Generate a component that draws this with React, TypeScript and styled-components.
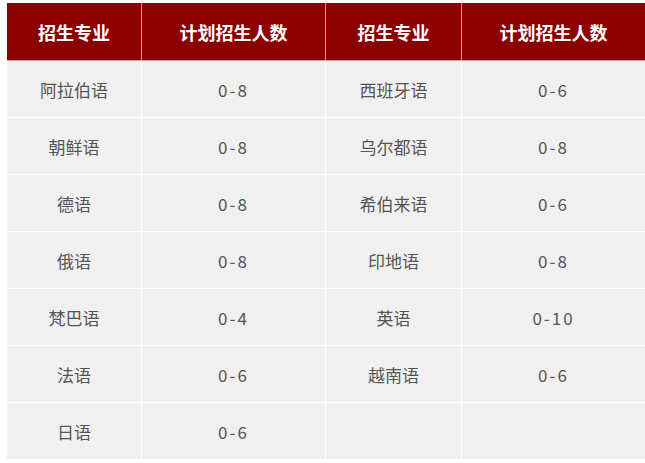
import styled, { createGlobalStyle } from 'styled-components';

const GlobalStyle = createGlobalStyle`
  body {
    margin: 0;
    background: #ffffff;
    font-family: "Noto Sans CJK SC", "Noto Sans", sans-serif;
  }
`;

const Page = styled.div`
  padding: 3px 4px 3px 6px;
`;

const Table = styled.table`
  width: 635px;
  border-collapse: collapse;
  table-layout: fixed;
`;

const HeadCell = styled.th<{ $w: number }>`
  width: ${(p) => p.$w}px;
  height: 57px;
  padding: 0;
  background: #8b0000;
  color: #ffffff;
  font-size: 18px;
  font-weight: 700;
  text-align: center;
  border: 1px solid rgba(255, 255, 255, 0.6);
  border-top: none;
`;

const Cell = styled.td<{ $num?: boolean }>`
  height: 56px;
  padding: 0;
  background: #f0f0f0;
  color: #555555;
  font-size: 17px;
  letter-spacing: ${(p) => (p.$num ? '2px' : '0')};
  text-align: center;
  border: 1px solid #ffffff;
  border-bottom: none;
`;

const left = [
  ['阿拉伯语', '0-8'],
  ['朝鲜语', '0-8'],
  ['德语', '0-8'],
  ['俄语', '0-8'],
  ['梵巴语', '0-4'],
  ['法语', '0-6'],
  ['日语', '0-6'],
];

const right = [
  ['西班牙语', '0-6'],
  ['乌尔都语', '0-8'],
  ['希伯来语', '0-6'],
  ['印地语', '0-8'],
  ['英语', '0-10'],
  ['越南语', '0-6'],
  ['', ''],
];

export default function App() {
  return (
    <Page>
      <GlobalStyle />
      <Table>
        <thead>
          <tr>
            <HeadCell $w={134}>招生专业</HeadCell>
            <HeadCell $w={183}>计划招生人数</HeadCell>
            <HeadCell $w={135}>招生专业</HeadCell>
            <HeadCell $w={183}>计划招生人数</HeadCell>
          </tr>
        </thead>
        <tbody>
          {left.map((row, i) => (
            <tr key={i}>
              <Cell>{row[0]}</Cell>
              <Cell $num>{row[1]}</Cell>
              <Cell>{right[i][0]}</Cell>
              <Cell $num>{right[i][1]}</Cell>
            </tr>
          ))}
        </tbody>
      </Table>
    </Page>
  );
}
